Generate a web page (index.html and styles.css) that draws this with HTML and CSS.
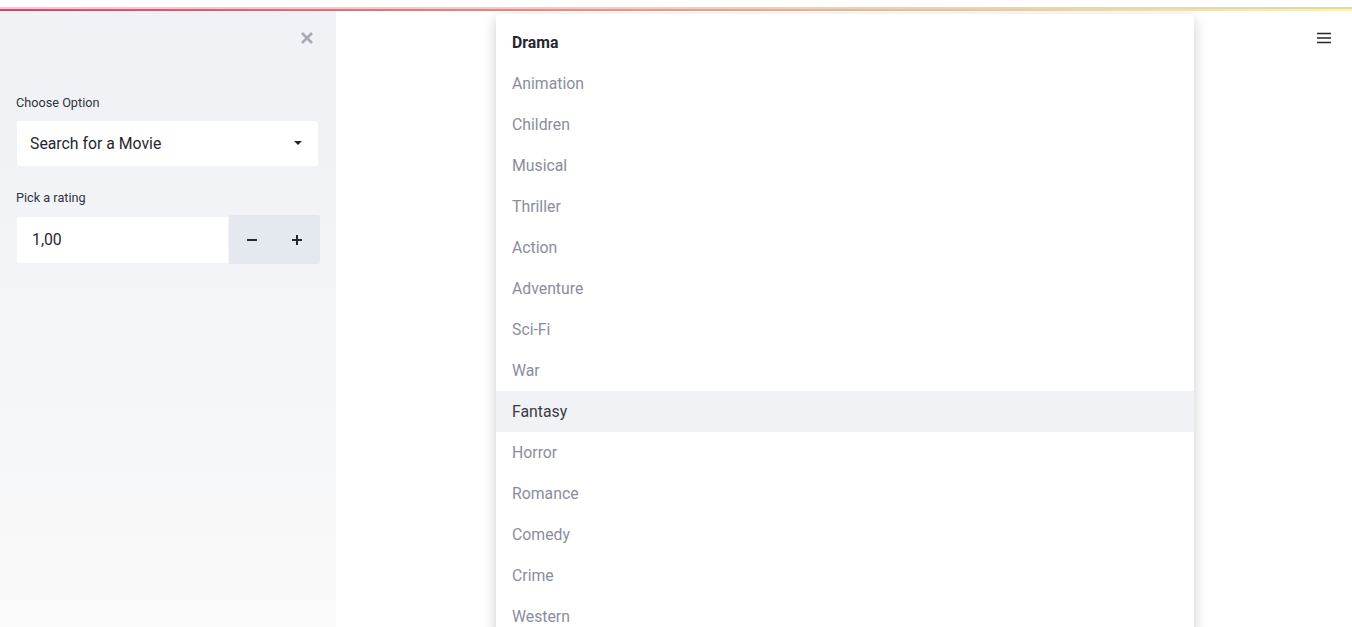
FILE: index.html
```html
<!DOCTYPE html>
<html>
<head>
<meta charset="utf-8">
<link rel="stylesheet" href="styles.css">
</head>
<body>
<div class="chrome"></div>
<div class="decoration"></div>
<div class="app">
  <aside class="sidebar">
    <div class="close-row">
      <svg class="close" width="14" height="14" viewBox="0 0 14 14"><path d="M2 2 L12 12 M12 2 L2 12" stroke="currentColor" stroke-width="2.6" stroke-linecap="butt"/></svg>
    </div>
    <div class="widget">
      <label class="label">Choose Option</label>
      <div class="select">
        <span>Search for a Movie</span>
        <svg class="caret" width="10" height="6" viewBox="0 0 10 6"><path d="M1 1 L9 1 L5 5 Z" fill="#262730"/></svg>
      </div>
    </div>
    <div class="widget">
      <label class="label">Pick a rating</label>
      <div class="number">
        <div class="num-field">1,00</div>
        <div class="num-buttons">
          <span class="step">
            <svg width="10" height="10" viewBox="0 0 10 10"><path d="M0 5 H10" stroke="#262730" stroke-width="2"/></svg>
          </span>
          <span class="step">
            <svg width="10" height="10" viewBox="0 0 10 10"><path d="M0 5 H10 M5 0 V10" stroke="#262730" stroke-width="2"/></svg>
          </span>
        </div>
      </div>
    </div>
  </aside>
  <main class="main">
    <button class="menu-btn" aria-label="menu">
      <svg width="16" height="14" viewBox="0 0 16 14"><path d="M1 2.5 H15 M1 7 H15 M1 11.5 H15" stroke="#262730" stroke-width="1.5"/></svg>
    </button>
    <ul class="dropdown">
      <li class="opt selected">Drama</li>
      <li class="opt">Animation</li>
      <li class="opt">Children</li>
      <li class="opt">Musical</li>
      <li class="opt">Thriller</li>
      <li class="opt">Action</li>
      <li class="opt">Adventure</li>
      <li class="opt">Sci-Fi</li>
      <li class="opt">War</li>
      <li class="opt hover">Fantasy</li>
      <li class="opt">Horror</li>
      <li class="opt">Romance</li>
      <li class="opt">Comedy</li>
      <li class="opt">Crime</li>
      <li class="opt">Western</li>
    </ul>
  </main>
</div>
</body>
</html>
```
FILE: styles.css
```css
html, body {
  margin: 0;
  padding: 0;
  height: 100%;
  overflow: hidden;
  background: #ffffff;
  font-family: "Roboto", "Liberation Sans", sans-serif;
  color: #262730;
}
.chrome {
  height: 7px;
  background: #ffffff;
  border-bottom: 2px solid #d6d6d8;
}
.decoration {
  height: 2px;
  background: linear-gradient(90deg, #f63366, #fffd80);
}
.app {
  display: flex;
  height: calc(100% - 11px);
}
.sidebar {
  width: 336px;
  flex: none;
  background: linear-gradient(180deg, #f0f2f6 0%, #f0f2f6 20%, #fafafa 100%);
  padding: 0 16px;
  box-sizing: border-box;
}
.close-row {
  display: flex;
  justify-content: flex-end;
  padding: 20px 6px 0 0;
  height: 32px;
  color: #a7aab5;
}
.widget {
  display: flex;
  flex-direction: column;
  margin-bottom: 26px;
}
.close-row + .widget {
  margin-top: 34px;
}
.label {
  font-size: 12.7px;
  color: #31333f;
  margin-bottom: 11px;
  line-height: 1;
}
.select {
  margin-left: 1px;
  height: 45px;
  width: 301px;
  background: #fff;
  border-radius: 3px;
  display: flex;
  align-items: center;
  justify-content: space-between;
  padding: 0 14px 0 13px;
  box-sizing: border-box;
  font-size: 15.8px;
}
.caret {
  margin-right: 1px;
}
.number {
  display: flex;
  align-items: center;
  margin-left: 1px;
}
.num-field {
  width: 211px;
  height: 46px;
  background: #fff;
  border-radius: 3px 0 0 3px;
  display: flex;
  align-items: center;
  padding-left: 15px;
  box-sizing: border-box;
  font-size: 15.8px;
}
.num-buttons {
  width: 91px;
  height: 49px;
  margin-left: 1px;
  background: #e4e8ef;
  border-radius: 0 3px 3px 0;
  display: flex;
}
.step {
  flex: 1;
  display: flex;
  align-items: center;
  justify-content: center;
}
.main {
  flex: 1;
  position: relative;
  overflow: hidden;
}
.menu-btn {
  position: absolute;
  top: 20px;
  right: 20px;
  border: 0;
  background: transparent;
  padding: 0;
  width: 16px;
  height: 14px;
}
.dropdown {
  position: absolute;
  top: 3px;
  left: 160px;
  width: 698px;
  margin: 0;
  padding: 8px 0 0;
  list-style: none;
  background: #fff;
  border-radius: 4px 4px 0 0;
  box-shadow: 0 4px 14px rgba(0, 0, 0, 0.2);
}
.opt {
  height: 41px;
  line-height: 41px;
  padding-left: 16px;
  font-size: 15.8px;
  color: #8b8d9c;
}
.opt.selected {
  color: #262730;
  font-weight: 700;
}
.opt.hover {
  background: #f0f2f6;
  color: #3a3b45;
}
```
